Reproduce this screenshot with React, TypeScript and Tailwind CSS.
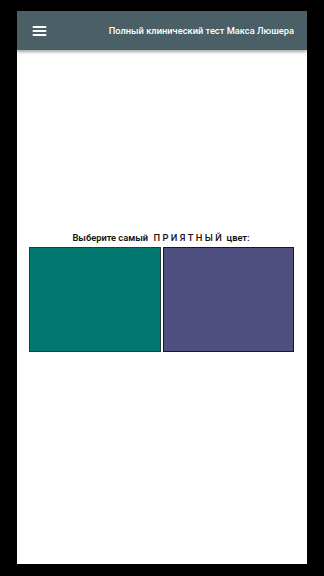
import React from "react";

export default function App() {
  return (
    <div className="w-[324px] h-[576px] bg-black pt-[11px] pl-[17px]" style={{ fontFamily: "Roboto, 'Noto Sans', sans-serif" }}>
      <div className="w-[290px] h-[553px] bg-white flex flex-col">
        <div className="h-[39px] bg-[#4b5f66] flex items-center justify-between pl-[15px] pr-[13px] shadow-[0_2px_3px_rgba(0,0,0,0.35)]">
          <svg width="15" height="12" viewBox="0 0 15 12">
            <rect x="0.5" y="1" width="14" height="2" rx="1" fill="#fff" />
            <rect x="0.5" y="5" width="14" height="2" rx="1" fill="#fff" />
            <rect x="0.5" y="9" width="14" height="2" rx="1" fill="#fff" />
          </svg>
          <span className="text-white text-[9.3px] font-medium">Полный клинический тест Макса Люшера</span>
        </div>
        <div className="flex flex-col items-center pt-[182px]">
          <div className="text-[9.3px] font-semibold text-[#111] leading-[11px] ml-[-2px]">
            Выберите самый <span className="font-medium tracking-[2.4px] ml-[3px]">ПРИЯТНЫЙ</span> цвет:
          </div>
          <div className="flex gap-[2px] mt-[4px] ml-[-2px]">
            <div className="w-[132px] h-[105px] bg-[#00786f] border border-[#1d3f3a]" />
            <div className="w-[131px] h-[105px] bg-[#4f507f] border border-[#12125a]" />
          </div>
        </div>
      </div>
    </div>
  );
}
